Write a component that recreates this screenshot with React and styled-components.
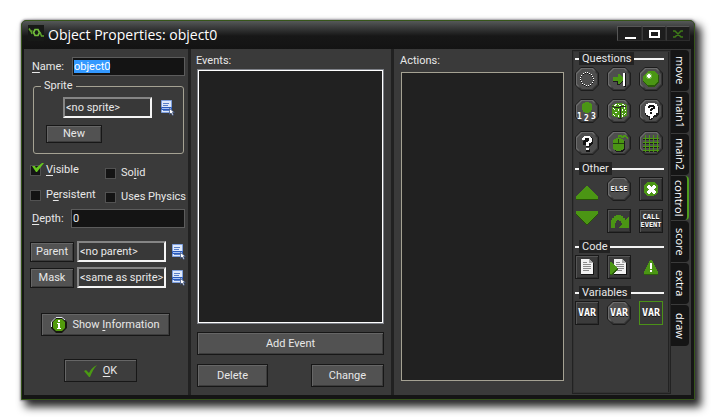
import React, { useEffect, useRef } from "react";
import styled, { createGlobalStyle, css } from "styled-components";

const GlobalStyle = createGlobalStyle`
  * { box-sizing: border-box; }
  html, body, #root { height: 100%; }
  body {
    margin: 0;
    background: #fff;
    color: #e8e8e8;
    font: 11px/14px Roboto, "Liberation Sans", sans-serif;
  }
  button, input { font: inherit; color: inherit; margin: 0; border-radius: 0; }
  u { text-underline-offset: 2px; }
`;

const Desktop = styled.div`
  height: 100%;
  min-height: 420px;
  padding: 20px 20px 20px 21px;
  display: flex;
`;

const Window = styled.main`
  flex: 1;
  min-width: 0;
  display: flex;
  flex-direction: column;
  border: 1px solid #36551a;
  border-radius: 5px 5px 0 0;
  background: #151515;
  padding: 0 3px 4px 2px;
  box-shadow: 0 0 2px 1px rgba(60, 50, 70, 0.4), 5px 6px 9px 1px rgba(0, 0, 0, 0.85);
`;

const TitleBar = styled.header`
  height: 28px;
  flex: none;
  margin: 0 -3px 0 -2px;
  padding: 4px 4px 0 6px;
  display: flex;
  border-radius: 4px 4px 0 0;
  background: linear-gradient(#555858 0, #444646 4px, #171717 15px, #131313);
`;

const Title = styled.h1`
  flex: 1;
  margin: 0 0 0 4px;
  color: #fff;
  font: 400 14px/19px "Open Sans", "Noto Sans", sans-serif;
`;

const WindowButtons = styled.div`
  display: flex;
  height: 15px;
  margin-top: 1px;
`;

const WindowButton = styled.button`
  width: 25px;
  height: 15px;
  padding: 0;
  display: grid;
  place-items: center;
  background: #1d1d1d;
  border: 1px solid #2c2c2c;
  border-top-color: #565656;
  border-left-color: #565656;
  & + & { width: 24px; border-left-color: #3a3a3a; }
`;

const Panels = styled.div`
  flex: 1;
  min-height: 0;
  display: grid;
  grid-template-columns: 164px minmax(0, 206fr) minmax(0, 178fr) 119px;
  background: #3a3a3a;
`;

const Panel = styled.section`
  display: flex;
  flex-direction: column;
  min-width: 0;
`;

const PropertyPanel = styled(Panel)`
  padding: 8px 3px 0 6px;
`;

const EventPanel = styled(Panel)`
  border: solid #212121;
  border-width: 0 3px;
  padding: 5px 7px 8px 6px;
`;

const ActionPanel = styled(Panel)`
  padding: 5px 8px 14px 7px;
`;

const PaneTitle = styled.h2`
  margin: 0 0 ${(p) => p.$gap}px -1px;
  font: inherit;
`;

const List = styled.div`
  flex: 1;
  background: #212121;
  border: 1px solid #a5a293;
  ${(p) =>
    p.$active &&
    css`
      border: 2px solid #fff;
      outline: 1px solid #7d8087;
      outline-offset: -1px;
    `}
`;

const Row = styled.div`
  display: flex;
  align-items: center;
  margin-top: ${(p) => p.$top || 0}px;
  padding-left: ${(p) => p.$inset || 0}px;
`;

const FieldLabel = styled.label`
  width: ${(p) => p.$width}px;
  flex: none;
`;

const TextField = styled.input`
  flex: 1;
  min-width: 0;
  height: 19px;
  padding: 0 1px;
  background: #141414;
  border: 1px solid #5c5c5c;
  outline: none;
  &::selection { background: #3399ff; color: #fff; }
`;

const ResourceField = styled.input`
  width: 89px;
  height: 21px;
  padding: 0 0 0 1px;
  background: #383838;
  border: 2px solid;
  border-color: #858585 #f5f5f5 #f5f5f5 #858585;
  outline: 0;
`;

const MenuButton = styled.button`
  width: 14px;
  height: 16px;
  padding: 0;
  border: 0;
  background: none;
  margin-left: ${(p) => p.$gap}px;
`;

const PushButton = styled.button`
  height: ${(p) => p.$height || 23}px;
  width: ${(p) => (p.$width ? p.$width + "px" : "auto")};
  flex: none;
  padding: 0;
  display: flex;
  align-items: center;
  justify-content: center;
  gap: 5px;
  white-space: nowrap;
  border: 1px solid #171717;
  background: ${(p) => (p.$dark ? "#3d3d3d" : "#525252")};
  box-shadow: inset 1px 1px #666, inset -1px -1px #3c3c3c;
`;

const Group = styled.fieldset`
  margin: 3px 0 0 3px;
  width: 151px;
  height: 75px;
  padding: 0 0 0 12px;
  border: 1px solid #a5a293;
  border-radius: 3px;
  legend { margin-left: -5px; padding: 0 3px; }
`;

const CheckGrid = styled.div`
  display: grid;
  grid-template-columns: 75px auto;
  margin-top: 9px;
  row-gap: 8px;
`;

const CheckLabel = styled.label`
  position: relative;
  display: flex;
  align-items: center;
  gap: 5px;
  white-space: nowrap;
  height: 14px;
  margin-top: ${(p) => p.$top || 0}px;
`;

const CheckBox = styled.input`
  appearance: none;
  width: 11px;
  height: 11px;
  border: 1px solid #525252;
  background: #141414;
`;

const Tick = styled.svg`
  position: absolute;
  left: 1px;
  top: -1px;
  pointer-events: none;
`;

const ButtonPair = styled.div`
  display: flex;
  justify-content: space-between;
  margin-top: 9px;
`;

const EventButtons = styled.div`
  display: flex;
  flex-direction: column;
  margin: 8px 0 0;
`;

const ActionLibrary = styled.aside`
  display: flex;
  padding: 1px 1px 1px 0;
`;

const Palette = styled.div`
  width: 99px;
  border: 2px solid #222;
  border-right-width: 3px;
  outline: 1px solid #333;
  outline-offset: -2px;
  padding: 0 4px 0 1px;
`;

const Section = styled.section`
  margin-bottom: 7px;
`;

const SectionTitle = styled.h3`
  margin: 0 0 2px;
  height: 13px;
  font: inherit;
  line-height: 13px;
  display: flex;
  align-items: center;
  span { background: #222; padding: 0 3px; }
  &::before, &::after { content: ""; height: 2px; background: #f4f4f4; flex: none; width: 4px; }
  &::after { flex: 1; }
`;

const ActionGrid = styled.div`
  display: grid;
  grid-template-columns: repeat(3, 24px);
  gap: 8px;
`;

const octagon = (s, c) =>
  `polygon(${c}px 0, ${s - c}px 0, ${s}px ${c}px, ${s}px ${s - c}px, ${s - c}px ${s}px, ${c}px ${s}px, 0 ${s - c}px, 0 ${c}px)`;

const Tile = styled.button`
  width: 24px;
  height: 24px;
  padding: 0;
  border: 0;
  display: grid;
  place-items: center;
  position: relative;
  background: none;
  color: #fff;
  svg, span { position: relative; z-index: 1; }
  ${(p) =>
    p.$kind === "octagon" &&
    css`
      background: #1c1c1c;
      clip-path: ${octagon(24, 6)};
      &::before, &::after {
        content: "";
        position: absolute;
        inset: 1px;
        background: linear-gradient(135deg, #6c6c6c 45%, #343434 55%);
        clip-path: ${octagon(22, 5)};
      }
      &::after {
        inset: 2px;
        background: #4e4e4e;
        clip-path: ${octagon(20, 5)};
      }
    `}
  ${(p) =>
    p.$kind === "square" &&
    css`
      background: #3b3b3b;
      border: 1px solid #191919;
      box-shadow: inset 1px 1px #555, inset -1px -1px #2d2d2d;
    `}
  ${(p) =>
    p.$kind === "outlined" &&
    css`
      background: #383838;
      border: 1px solid #4b9118;
    `}
`;

const TileText = styled.span`
  font: bold ${(p) => p.$size}px/8px "DejaVu Sans Mono", monospace;
  text-shadow: 0 1px #111;
`;

const Tabs = styled.nav`
  width: 18px;
  display: flex;
  flex-direction: column;
  gap: 1px;
`;

const Tab = styled.button`
  width: 18px;
  height: ${(p) => (p.$active ? 44 : 41)}px;
  padding: 0;
  border: 0;
  border-right: ${(p) => (p.$active ? "2px solid #4f9d1d" : "0")};
  border-radius: 0 4px 4px 0;
  background: #151515;
  color: #fff;
  writing-mode: vertical-rl;
  font: 400 11px/14px "Open Sans", "Noto Sans", sans-serif;
  text-align: center;
`;

const G = "#4b9614";
const Svg = ({ s = 24, h, children, ...rest }) => (
  <svg width={s} height={h || s} viewBox={`0 0 ${s} ${h || s}`} aria-hidden="true" {...rest}>
    {children}
  </svg>
);

const MenuIcon = () => (
  <Svg s={14} h={16}>
    <path fill="#dfe9fb" stroke="#7ea0df" d="M.5.5h10v12H.5z" />
    <path stroke="#587fc8" d="M2 3.500h6M2 5.500h5M2 10.500h6" />
    <path fill="#a9c4f4" stroke="#2b5bbb" d="M.5 7.500h10v2H.5z" />
    <path fill="#fff" stroke="#2d4474" strokeWidth=".7" d="M8.500 8.500v6l1.500-1.500 1.500 2.500 1-.5-1-2.500h2z" />
  </Svg>
);

const Paper = () => (
  <>
    <path fill="#f2f2f2" d="M6 4h8l4 4v11H6z" />
    <path fill="#aaa" d="M14 4v4h4z" />
    <path stroke="#8a8a8a" d="M8 7.500h4M8 9.500h8M8 11.500h8M8 13.500h8M8 15.500h6" />
    <path fill="#141414" d="M6 19h12v1H6zM18 8h1v12h-1z" />
  </>
);

const dots = (cells, fill) =>
  cells.map(([x, y]) => <rect key={`${x}-${y}`} x={x} y={y} width="1" height="1" fill={fill} />);

const ring = [
  [10, 5], [12, 5], [14, 6], [16, 7], [17, 9], [18, 11], [18, 13], [17, 15],
  [15, 17], [13, 18], [11, 18], [9, 17], [7, 16], [6, 14], [5, 12], [5, 10], [6, 8], [8, 6],
];

const icons = {
  circle: <>{dots(ring.map(([x, y]) => [x, y + 1]), "#161616")}{dots(ring, "#fff")}</>,
  jump: (
    <>
      <path fill="#1b1b1b" d="M6 14h5v3h1l5-5v1l-5 5h-2v-3H6z" />
      <path fill={G} d="M6 10h5V7h1l4 4v2l-4 4h-1v-3H6z" />
      <path fill="#fff" d="M16 6h2v13h-2z" />
      <path fill="#111" d="M18 6h1v14h-2v-1h1z" />
    </>
  ),
  ball: (
    <>
      <path fill="#2a5a0b" d="M9 4h6l5 5v6l-5 5H9l-5-5V9z" />
      <path fill={G} d="M9 4h6l4 4v6l-4 4H9l-5-4V9z" />
      <path fill="#74b947" d="M8 6h4v1h1v4h-1v1H8v-1H7V7h1z" />
      <path fill="#fff" d="M9 7h2v1h1v2h-1v1H9v-1H8V8h1z" />
    </>
  ),
  count: (
    <>
      <path fill={G} d="M10 3h4v1h2v1h1v6h-1v2h-2v1h-4v-1H8v-2H7V5h1V4h2z" />
      <g fill="#fff" fontFamily="DejaVu Sans Mono" fontWeight="bold" fontSize="8">
        <text x="2" y="20">1</text>
        <text x="9" y="22">2</text>
        <text x="16" y="20">3</text>
      </g>
    </>
  ),
  dice: (
    <>
      <path fill={G} d="M9 4h7v1h3v1h1v11h-2v1h-3v1h-4v-1H7v-1H5V6h2V5h2z" />
      <path fill="#272727" d="M5 7h2v1h6v-1h6v1h-5v11h-1V9H7V8H5zM11 19h4v1h-4z" />
      {dots([
        [8, 5], [9, 5], [11, 5], [15, 5], [16, 5], [7, 6], [8, 6], [12, 6], [13, 6], [17, 6],
        [6, 9], [7, 10], [11, 10], [11, 11], [8, 13], [9, 13], [6, 15], [7, 16], [11, 16], [11, 17],
        [17, 8], [17, 9], [15, 10], [15, 11], [18, 11], [15, 14], [18, 14], [17, 15], [15, 16], [15, 17],
      ], "#fff")}
    </>
  ),
  bubble: (
    <>
      <path fill="#1a1a1a" d="M6 8h14v7l-3 3h-2l-3 3h-2v-3H8l-2-3z" />
      <path fill="#fff" d="M9 4h7v1h2v2h1v7h-2v2h-2v1h-1v2h-2v1h-1v-3H9v-1H7v-2H6V7h1V5h2z" />
      <path fill="#111" d="M10 6h5v1h1v3h-2v1h-1v1h-2v-2h1V9h2V8h-3v1H9V7h1zM11 13h2v2h-2z" />
    </>
  ),
  question: (
    <>
      <path fill="#141414" d="M9 6h7l2 2v4l-3 3v1h-4v-2H8zM11 18h4v3h-4z" />
      <path fill="#fff" d="M9 5h6v1h1v1h1v4h-1v1h-2v3h-3v-4h2v-1h1V7h-4v2H7V7h1V6h1zM11 17h3v2h-3z" />
    </>
  ),
  mouse: (
    <>
      <path fill="#1b1b1b" d="M6 10h12v8l-3 3H9l-3-3z" />
      <path fill={G} d="M9 7h5v1h2v1h1v9h-1v1h-2v1H9v-1H7v-1H6V9h1V8h2z" />
      <path fill="#23420e" d="M6 12h11v1H6zM11 8h1v4h-1z" />
      <path fill={G} d="M11 4h4v1h1v-1h3v1h1v1h1v2h-1V7h-1V6h-2v1h-3V6h-2v1h-1z" />
    </>
  ),
  grid: (
    <>
      <path stroke="#1d1d1d" d="M4 8.500h16M4 12.500h16M4 16.500h16M4 20.500h16" />
      <path stroke={G} d="M4 7.500h16M4 11.500h16M4 15.500h16M4 19.500h16M6.500 4v17M10.500 4v17M14.500 4v17M18.500 4v17" />
    </>
  ),
  up: (
    <>
      <path fill="#285408" d="M1 22h22v1H1z" />
      <path fill={G} d="M11 9h2l10 11v2H1v-2z" />
    </>
  ),
  down: (
    <>
      <path fill="#285408" d="M1 5h22L13 16h-2z" />
      <path fill={G} d="M1 2h22v2L13 15h-2L1 4z" />
    </>
  ),
  exit: (
    <>
      <circle cx="11" cy="11" r="7.500" fill={G} />
      <path fill="#fff" d="M7 8h1V7h2v1h1v1h1V8h1V7h2v1h1v2h-1v1h-1v1h1v1h1v2h-1v1h-2v-1h-1v-1h-1v1h-1v1H8v-1H7v-2h1v-1h1v-1H8v-1H7z" />
    </>
  ),
  repeat: (
    <path fill={G} d="M3 18v-8h1V8h2V6h2V5h5v1h2v2h2v2h1V9h1V8h1V7h1v11H11v-1h1v-1h1v-1h1v-2h-1v-2h-2v-1H9v1H8v2H7v5z" />
  ),
  code: <Paper />,
  script: (
    <>
      <g transform="translate(1 0)"><Paper /></g>
      <path fill="#2a5d0b" d="M3 8h2l7 6-7 6H3z" />
      <path fill={G} d="M3 7h1l7 6-7 6H3z" />
    </>
  ),
  comment: (
    <>
      <path fill="#2c600b" d="M5 18h14v2H5z" />
      <path fill={G} d="M11 5h2l6 12v2H5v-2z" />
      <path fill="#fff" d="M11 8h2v6h-2zM11 15h2v2h-2z" />
    </>
  ),
};

const sections = [
  ["Questions", [
    ["circle", "octagon"], ["jump", "octagon"], ["ball", "octagon"],
    ["count", "octagon"], ["dice", "octagon"], ["bubble", "octagon"],
    ["question", "octagon"], ["mouse", "octagon"], ["grid", "octagon"],
  ]],
  ["Other", [
    ["up", "plain"], ["ELSE", "octagon", 7], ["exit", "square"],
    ["down", "plain"], ["repeat", "square"], ["CALL EVENT", "square", 7],
  ]],
  ["Code", [["code", "square"], ["script", "square"], ["comment", "plain"]]],
  ["Variables", [["VAR", "square", 10], ["VAR", "octagon", 10], ["VAR", "outlined", 10]]],
];

const tabs = ["move", "main1", "main2", "control", "score", "extra", "draw"];

const TileIcon = ({ name, kind }) =>
  kind === "square" ? (
    <Svg s={22} shapeRendering="crispEdges">
      <g transform={name === "exit" || name === "repeat" ? undefined : "translate(-1 -1)"}>{icons[name]}</g>
    </Svg>
  ) : (
    <Svg shapeRendering="crispEdges">{icons[name]}</Svg>
  );

const Resource = ({ label, value, gap }) => (
  <>
    <ResourceField aria-label={label} defaultValue={value} readOnly />
    <MenuButton $gap={gap} aria-label={`Choose ${label}`}><MenuIcon /></MenuButton>
  </>
);

const Check = ({ top, checked, children }) => (
  <CheckLabel $top={top}>
    <CheckBox type="checkbox" defaultChecked={checked} />
    <span>{children}</span>
    {checked && (
      <Tick width="13" height="11" viewBox="0 0 13 11" aria-hidden="true">
        <path fill="#66c51f" d="M1 4h3l1 2 6-5h2L6 10H5z" />
      </Tick>
    )}
  </CheckLabel>
);

export default function App() {
  const nameRef = useRef(null);
  useEffect(() => {
    nameRef.current.focus();
    nameRef.current.select();
  }, []);

  return (
    <>
      <GlobalStyle />
      <Desktop>
        <Window>
          <TitleBar>
            <Svg s={16}>
              <path fill="#171917" d="M0 0h16v16H0z" />
              <path fill="none" stroke="#72bd3c" strokeWidth="1.700" d="M7 4.500h3l1.500 3-1.500 3H7L5.500 7.500z" />
              <path fill="none" stroke="#5da32b" strokeWidth="1.500" d="M1 3.500l1.500 2.500h2M3 6l1 3M12 7l1.500 4H16" />
            </Svg>
            <Title>Object Properties: object0</Title>
            <WindowButtons>
              <WindowButton aria-label="Minimize">
                <Svg s={12} h={10}><path fill="#fff" d="M1 8h11v2H1z" /></Svg>
              </WindowButton>
              <WindowButton aria-label="Maximize">
                <Svg s={12} h={10}><path fill="none" stroke="#fff" strokeWidth="2" d="M2 2h9v6H2z" /></Svg>
              </WindowButton>
              <WindowButton aria-label="Close">
                <Svg s={12} h={10}><path fill="none" stroke="#3e7a18" strokeWidth="1.500" d="M1 2h2l6 6h2M11 2H9L3 8H1" /></Svg>
              </WindowButton>
            </WindowButtons>
          </TitleBar>
          <Panels>
            <PropertyPanel>
              <Row $inset={2}>
                <FieldLabel $width={40} htmlFor="name"><u>N</u>ame:</FieldLabel>
                <TextField id="name" ref={nameRef} defaultValue="object0" />
              </Row>
              <Group>
                <legend>Sprite</legend>
                <Row $top={4} $inset={17}>
                  <Resource label="sprite" value="<no sprite>" gap={9} />
                </Row>
                <Row $top={7}><PushButton $width={56} $height={18}>New</PushButton></Row>
              </Group>
              <CheckGrid>
                <Check checked><u>V</u>isible</Check>
                <Check top={3}>So<u>l</u>id</Check>
                <Check>P<u>e</u>rsistent</Check>
                <Check top={2}>Uses Physics</Check>
              </CheckGrid>
              <Row $top={5} $inset={2}>
                <FieldLabel $width={39} htmlFor="depth"><u>D</u>epth:</FieldLabel>
                <TextField id="depth" defaultValue="0" />
              </Row>
              <Row $top={13}>
                <PushButton $width={44} $height={20}>Parent</PushButton>
                <Row $inset={3}><Resource label="parent" value="<no parent>" gap={6} /></Row>
              </Row>
              <Row $top={5}>
                <PushButton $width={44} $height={20}>Mask</PushButton>
                <Row $inset={3}><Resource label="mask" value="<same as sprite>" gap={6} /></Row>
              </Row>
              <Row $top={25} $inset={11}>
                <PushButton $width={129}>
                  <Svg s={16}>
                    <path fill="#16180f" d="M5 0h6l5 5v6l-5 5H5l-5-5V5z" />
                    <path fill="#529b0c" d="M5 2h6l3 3v6l-3 3H5l-3-3V5z" />
                    <path fill="none" stroke="#e4e6f0" d="M.5 10V5L5 .5h6l3 2.500" />
                    <path fill="#fff" d="M7 3h2v2H7zM6 6h3v5h1v1H6v-1h1V7H6z" />
                  </Svg>
                  <span>Show <u>I</u>nformation</span>
                </PushButton>
              </Row>
              <Row $top={23} $inset={34}>
                <PushButton $width={73} $dark>
                  <Svg s={14}><path fill="#4b9a13" d="M0 7l2-1 3 3c2-4 4-6 8-8-3 3-5 7-7 12H5z" /></Svg>
                  <span><u>O</u>K</span>
                </PushButton>
              </Row>
            </PropertyPanel>
            <EventPanel>
              <PaneTitle $gap={1}>Events:</PaneTitle>
              <List $active />
              <EventButtons>
                <PushButton>Add Event</PushButton>
                <ButtonPair>
                  <PushButton $width={71}>Delete</PushButton>
                  <PushButton $width={73}>Change</PushButton>
                </ButtonPair>
              </EventButtons>
            </EventPanel>
            <ActionPanel>
              <PaneTitle $gap={4}>Actions:</PaneTitle>
              <List />
            </ActionPanel>
            <ActionLibrary>
              <Palette>
                {sections.map(([title, items]) => (
                  <Section key={title}>
                    <SectionTitle><span>{title}</span></SectionTitle>
                    <ActionGrid>
                      {items.map(([name, kind, size], i) => (
                        <Tile key={i} $kind={kind} aria-label={name}>
                          {size ? <TileText $size={size}>{name}</TileText> : <TileIcon name={name} kind={kind} />}
                        </Tile>
                      ))}
                    </ActionGrid>
                  </Section>
                ))}
              </Palette>
              <Tabs>
                {tabs.map((t) => <Tab key={t} $active={t === "control"}>{t}</Tab>)}
              </Tabs>
            </ActionLibrary>
          </Panels>
        </Window>
      </Desktop>
    </>
  );
}
